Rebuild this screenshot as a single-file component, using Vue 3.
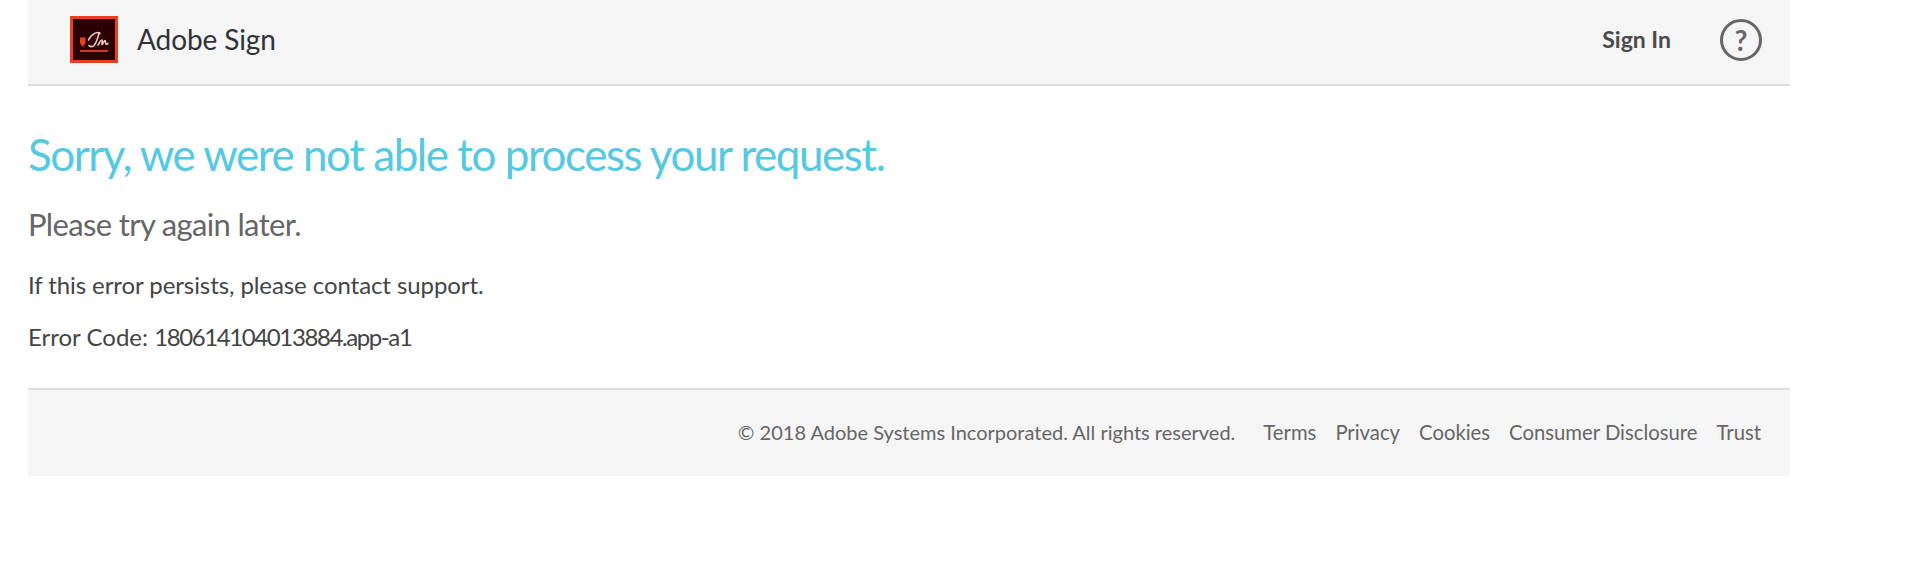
<script setup>
const footerLinks = ['Terms', 'Privacy', 'Cookies', 'Consumer Disclosure', 'Trust']
</script>

<template>
  <div class="page">
    <header class="top-bar">
      <div class="brand">
        <svg class="logo" width="48" height="47" viewBox="0 0 48 47">
          <rect x="1.5" y="1.5" width="45" height="44" fill="#2a0004" stroke="#e8401c" stroke-width="3" />
          <path d="M10 21.500h5.500v5.500l-2.750 4L10 27z" fill="#e8401c" />
          <path
            d="M18.500 24c1-3 5-7 9-7.500 2-.3 3 .5 2 1.500M29 17c-1 4-2 9-5 12.500-1.500 1.500-4 1.500-5 0M28 29c1.500-2.500 3-5.500 4-5s-.5 4 0 4.500 2-4 3-4 0 3 1 3.500 1.500-.5 2-.5"
            fill="none"
            stroke="#f4c9bd"
            stroke-width="1.600"
            stroke-linecap="round"
            stroke-linejoin="round"
          />
          <rect x="10" y="34" width="28" height="2" fill="#c9381a" />
        </svg>
        <span class="brand-name">Adobe Sign</span>
      </div>
      <div class="top-actions">
        <a class="sign-in">Sign In</a>
        <span class="help">?</span>
      </div>
    </header>

    <main class="content">
      <h1>Sorry, we were not able to process your request.</h1>
      <h2>Please try again later.</h2>
      <p class="persist">If this error persists, please contact support.</p>
      <p class="code">Error Code: <span class="code-value">180614104013884.app-a1</span></p>
    </main>

    <footer class="bottom-bar">
      <span class="copyright">© 2018 Adobe Systems Incorporated. All rights reserved.</span>
      <a v-for="link in footerLinks" :key="link" class="footer-link">{{ link }}</a>
    </footer>
  </div>
</template>

<style>
body {
  background: #fff;
}
</style>

<style scoped>
.page {
  width: 1762px;
  margin-left: 28px;
  font-family: Lato, "Open Sans", sans-serif;
}

.top-bar {
  height: 79px;
  display: flex;
  justify-content: space-between;
  align-items: center;
  padding: 0 28px 5px 42px;
  background: #f5f5f5;
  border-bottom: 2px solid #dedede;
}

.brand {
  display: flex;
  align-items: center;
  gap: 19px;
}

.logo {
  display: block;
}

.brand-name {
  padding-bottom: 2px;
  font-size: 28px;
  letter-spacing: -0.1px;
  color: #2f3338;
}

.top-actions {
  display: flex;
  align-items: center;
  gap: 49px;
}

.sign-in {
  padding-bottom: 2px;
  font-size: 23px;
  font-weight: 700;
  color: #4b4b4b;
}

.help {
  width: 42px;
  height: 42px;
  box-sizing: border-box;
  display: flex;
  align-items: center;
  justify-content: center;
  border: 3px solid #666;
  border-radius: 50%;
  font-size: 28px;
  font-weight: 700;
  color: #666;
}

.content {
  height: 302px;
  box-sizing: border-box;
  padding-top: 42px;
}

h1 {
  margin: 0;
  font-size: 44px;
  line-height: 52px;
  font-weight: 400;
  letter-spacing: -1.47px;
  color: #55c8e2;
}

h2 {
  margin: 25px 0 0;
  font-size: 31px;
  line-height: 38px;
  font-weight: 400;
  letter-spacing: -0.65px;
  color: #666;
}

p {
  margin: 0;
  font-size: 24px;
  line-height: 30px;
  color: #444;
}

.persist {
  margin-top: 27px;
  letter-spacing: -0.08px;
}

.code {
  margin-top: 22px;
}

.code-value {
  letter-spacing: -1.4px;
}

.bottom-bar {
  height: 88px;
  box-sizing: border-box;
  display: flex;
  align-items: center;
  justify-content: flex-end;
  gap: 19px;
  padding: 0 29px 2px 0;
  background: #f5f5f5;
  border-top: 2px solid #dedede;
  font-size: 20px;
  color: #666;
}

.copyright {
  margin-right: 9px;
}

.footer-link {
  font-size: 20.3px;
}
</style>
